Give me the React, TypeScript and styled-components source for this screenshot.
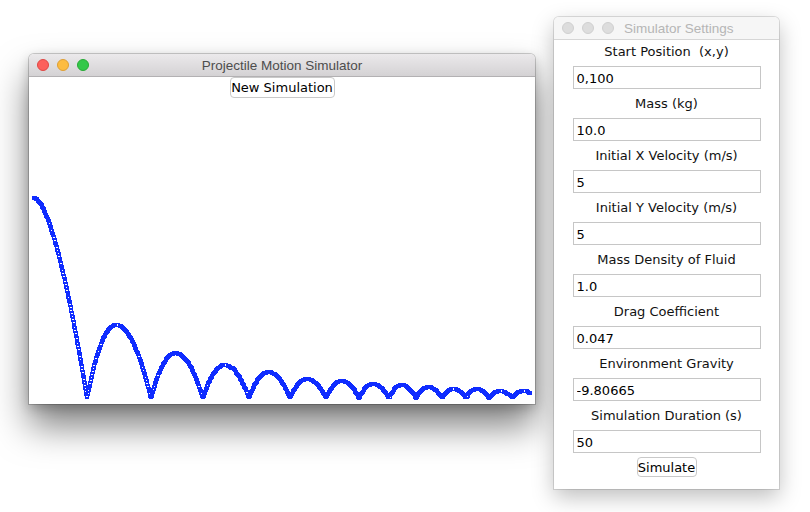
import React from "react";
import styled, { createGlobalStyle } from "styled-components";

const GlobalStyle = createGlobalStyle`
  html, body { margin: 0; padding: 0; background: #ffffff; }
  body { font-family: "DejaVu Sans", "Liberation Sans", sans-serif; }
`;

const UI_FONT = `"DejaVu Sans", "Liberation Sans", sans-serif`;
const TITLE_FONT = `"Liberation Sans", Arial, sans-serif`;

const Desktop = styled.div`
  position: relative;
  width: 810px;
  height: 512px;
  overflow: hidden;
  background: #ffffff;
`;

const Window = styled.div<{ $x: number; $y: number; $w: number; $active?: boolean }>`
  position: absolute;
  left: ${(p) => p.$x}px;
  top: ${(p) => p.$y}px;
  width: ${(p) => p.$w}px;
  display: flex;
  flex-direction: column;
  background: #ffffff;
  border-radius: 5px 5px 0 0;
  box-shadow: ${(p) =>
    p.$active
      ? "0 0 0 1px rgba(0,0,0,0.18), 0 22px 36px rgba(0,0,0,0.5), 0 4px 12px rgba(0,0,0,0.2)"
      : "0 0 0 1px rgba(0,0,0,0.12), 0 8px 22px rgba(0,0,0,0.26)"};
`;

const TitleBar = styled.div<{ $active?: boolean }>`
  height: 22px;
  display: flex;
  align-items: center;
  padding-left: 8px;
  border-radius: 5px 5px 0 0;
  border-bottom: 1px solid ${(p) => (p.$active ? "#b3b1b3" : "#d6d6d6")};
  background: ${(p) =>
    p.$active ? "linear-gradient(#ebe9eb, #d4d2d4)" : "#f6f6f6"};
`;

const Lights = styled.div`
  display: flex;
  gap: 8px;
`;

const Light = styled.span<{ $fill: string; $ring: string }>`
  width: 12px;
  height: 12px;
  box-sizing: border-box;
  border-radius: 50%;
  background: ${(p) => p.$fill};
  border: 0.5px solid ${(p) => p.$ring};
`;

const Title = styled.div<{ $active?: boolean; $centered?: boolean }>`
  flex: 1;
  font-family: ${TITLE_FONT};
  font-size: 13.5px;
  white-space: nowrap;
  color: ${(p) => (p.$active ? "#4d4d4d" : "#b5b5b5")};
  text-align: ${(p) => (p.$centered ? "center" : "left")};
  padding-left: ${(p) => (p.$centered ? 0 : 10)}px;
  padding-right: ${(p) => (p.$centered ? 60 : 0)}px;
`;

const SimBody = styled.div`
  height: 327px;
  display: flex;
  flex-direction: column;
  align-items: center;
  background: #ffffff;
`;

const MacButton = styled.button<{ $w: number; $h: number }>`
  width: ${(p) => p.$w}px;
  height: ${(p) => p.$h}px;
  padding: 0;
  box-sizing: border-box;
  background: #ffffff;
  border: 1px solid #c9c9c9;
  border-radius: 4px;
  font-family: ${UI_FONT};
  font-size: 13px;
  color: #000000;
  line-height: 1;
  white-space: nowrap;
`;

const Canvas = styled.svg`
  display: block;
  flex: 1;
  width: 100%;
`;

const Form = styled.div`
  display: flex;
  flex-direction: column;
  align-items: center;
  padding-bottom: 12px;
  background: #ffffff;
`;

const Field = styled.div`
  display: flex;
  flex-direction: column;
  align-items: center;
  margin-bottom: 3px;
`;

const FieldLabel = styled.label`
  font-family: ${UI_FONT};
  font-size: 13px;
  line-height: 22px;
  padding-top: 1px;
  margin-bottom: 3px;
  color: #111111;
  white-space: pre;
`;

const FieldInput = styled.input`
  width: 188px;
  height: 23px;
  box-sizing: border-box;
  margin: 0;
  padding: 1px 3px 0;
  border: 1px solid #c6c6c6;
  border-radius: 0;
  background: #ffffff;
  font-family: ${UI_FONT};
  font-size: 13px;
  color: #000000;
  outline: none;
`;

const SimulateButton = styled(MacButton)`
  margin-top: 1px;
`;

/* ---------- trajectory ---------- */
const OX = 29;
const OY = 98;
const GROUND_C = 398;
const impacts = [87, 151, 203, 249, 290, 326, 359, 389, 416, 442, 466, 489, 512];
const peaks = [323, 351, 363, 370, 377, 379, 382, 383, 385, 387, 387, 389, 389];

function yAt(x: number): number {
  if (x < impacts[0]) {
    if (x <= 35) return 198;
    const t = Math.min(1, (x - 35) / 52);
    return 198 + 200 * Math.pow(t, 1.6);
  }
  for (let i = 0; i < impacts.length; i++) {
    const a = impacts[i];
    const b = i + 1 < impacts.length ? impacts[i + 1] : 536;
    if (x >= a && x <= b) {
      const top = peaks[i] + 2;
      const h = GROUND_C - top;
      const p = a + (i === 0 ? 0.45 : 0.47) * (b - a);
      const half = x < p ? p - a : b - p;
      const u = (x - p) / half;
      return top + h * u * u;
    }
  }
  return GROUND_C;
}

function buildPoints(): Array<[number, number]> {
  const pts: Array<[number, number]> = [];
  let lx = -100;
  let ly = -100;
  for (let x = 33.5; x <= 531.5; x += 0.05) {
    const y = yAt(x);
    const d = Math.hypot(x - lx, y - ly);
    if (d >= 1.4) {
      pts.push([Math.round(x - 2) - OX, Math.round(y - 2) - OY]);
      lx = x;
      ly = y;
    }
  }
  return pts;
}

const points = buildPoints();

const Trajectory: React.FC = () => (
  <Canvas viewBox="0 0 506 306" shapeRendering="crispEdges">
    {points.map(([x, y], i) => (
      <rect
        key={i}
        x={x + 0.5}
        y={y + 0.5}
        width={3}
        height={3}
        fill="none"
        stroke="#0f2cff"
        strokeWidth={1}
      />
    ))}
  </Canvas>
);

const fields: Array<[string, string]> = [
  ["Start Position  (x,y)", "0,100"],
  ["Mass (kg)", "10.0"],
  ["Initial X Velocity (m/s)", "5"],
  ["Initial Y Velocity (m/s)", "5"],
  ["Mass Density of Fluid", "1.0"],
  ["Drag Coefficient", "0.047"],
  ["Environment Gravity", "-9.80665"],
  ["Simulation Duration (s)", "50"],
];

const ActiveLights = () => (
  <Lights>
    <Light $fill="#fc605c" $ring="#df4744" />
    <Light $fill="#fdbc40" $ring="#de9f34" />
    <Light $fill="#34c84a" $ring="#27aa35" />
  </Lights>
);

const InactiveLights = () => (
  <Lights>
    <Light $fill="#dddddd" $ring="#d0d0d0" />
    <Light $fill="#dddddd" $ring="#d0d0d0" />
    <Light $fill="#dddddd" $ring="#d0d0d0" />
  </Lights>
);

export default function App() {
  return (
    <Desktop>
      <GlobalStyle />
      <Window $x={29} $y={54} $w={506} $active>
        <TitleBar $active>
          <ActiveLights />
          <Title $active $centered>
            Projectile Motion Simulator
          </Title>
        </TitleBar>
        <SimBody>
          <MacButton $w={105} $h={21}>New Simulation</MacButton>
          <Trajectory />
        </SimBody>
      </Window>

      <Window $x={554} $y={17} $w={225}>
        <TitleBar>
          <InactiveLights />
          <Title>Simulator Settings</Title>
        </TitleBar>
        <Form>
          {fields.map(([label, value]) => (
            <Field key={label}>
              <FieldLabel>{label}</FieldLabel>
              <FieldInput readOnly defaultValue={value} />
            </Field>
          ))}
          <SimulateButton $w={60} $h={20}>Simulate</SimulateButton>
        </Form>
      </Window>
    </Desktop>
  );
}
